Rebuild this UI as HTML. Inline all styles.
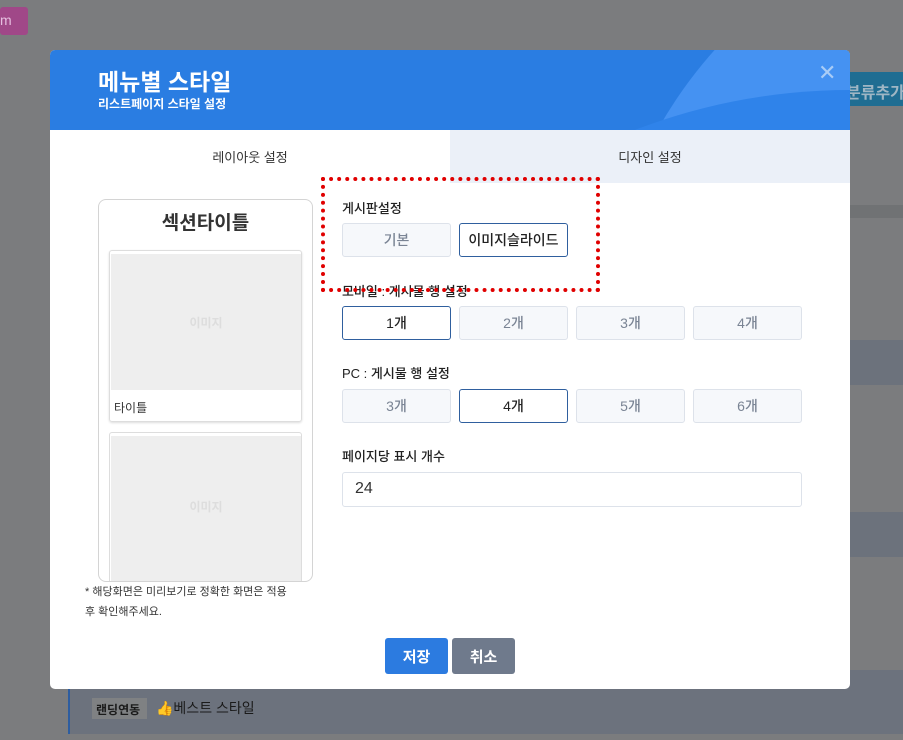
<!DOCTYPE html>
<html><head><meta charset="utf-8"><style>
*{box-sizing:border-box;margin:0;padding:0}
body{width:903px;height:740px;overflow:hidden;background:#7b7c7e;font-family:"Liberation Sans","Noto Sans CJK KR",sans-serif;position:relative}
.a{position:absolute}
.btn{position:absolute;width:109px;height:34px;border:1px solid #dde2ea;background:#f6f8fb;border-radius:3px;color:#7a8494;font-size:14px;font-weight:500;display:flex;align-items:center;justify-content:center}
.btn.on{border-color:#2f5f9e;background:#fff;color:#222}
.lbl{position:absolute;left:342px;font-size:13px;color:#222;font-weight:500}
</style></head><body>
<div class="a" style="left:0;top:7px;width:28px;height:28px;background:#a04888;border-radius:3px;color:#e6bfe0;font-size:14px;padding:5px 0 0 0">m</div>
<div class="a" style="left:838px;top:72px;width:65px;height:34px;background:#1f6d92;color:#9fb6c4;font-size:16px;font-weight:bold;padding:7px 0 0 8px;white-space:nowrap">분류추가</div>
<div class="a" style="left:850px;top:205px;width:53px;height:13px;background:#707274"></div>
<div class="a" style="left:850px;top:340px;width:53px;height:45px;background:#6c727c"></div>
<div class="a" style="left:850px;top:512px;width:53px;height:45px;background:#6c727c"></div>
<div class="a" style="left:68px;top:670px;width:835px;height:64px;background:#6c727d;border-left:2px solid #2d5da0"></div>
<div class="a" style="left:92px;top:698px;width:55px;height:21px;background:#7f8183;font-size:12px;font-weight:bold;color:#1a1a1a;padding:3px 0 0 4px">랜딩연동</div>
<div class="a" style="left:156px;top:698px;font-size:14px;color:#1a1a1a">👍베스트 스타일</div>

<div class="a" style="left:50px;top:50px;width:800px;height:639px;background:#fff;border-radius:5px;overflow:hidden">
 <div class="a" style="left:0;top:0;width:800px;height:80px;background:#2a7de2;overflow:hidden">
  <div class="a" style="left:550px;top:-150px;width:900px;height:900px;border-radius:50%;background:#4592f2"></div>
  <div class="a" style="left:200px;top:40px;width:1200px;height:1200px;border-radius:50%;background:#2f83ea"></div>
  <div class="a" style="left:48px;top:13px;color:#fff;font-size:23px;font-weight:bold">메뉴별 스타일</div>
  <div class="a" style="left:48px;top:45px;color:#fff;font-size:12px;font-weight:bold">리스트페이지 스타일 설정</div>
  <div class="a" style="left:768px;top:10px;color:#a9ccf6;font-size:22px;font-weight:300">✕</div>
 </div>
 <div class="a" style="left:0;top:80px;width:400px;height:53px;font-size:13px;color:#333;display:flex;align-items:center;justify-content:center">레이아웃 설정</div>
 <div class="a" style="left:400px;top:80px;width:400px;height:53px;background:#ebf0f8;font-size:13px;color:#333;display:flex;align-items:center;justify-content:center">디자인 설정</div>
 <div class="a" style="left:48px;top:149px;width:215px;height:383px;border:1px solid #d4d4d4;border-radius:8px;overflow:hidden">
  <div class="a" style="left:0;top:8px;width:213px;text-align:center;font-size:19px;font-weight:bold;color:#333">섹션타이틀</div>
  <div class="a" style="left:10px;top:50px;width:193px;height:172px;border:1px solid #ddd;border-radius:3px;box-shadow:0 1px 2px #ddd">
   <div class="a" style="left:1px;top:3px;width:190px;height:136px;background:#eee;color:#ddd;font-size:12px;font-weight:bold;display:flex;align-items:center;justify-content:center">이미지</div>
   <div class="a" style="left:4px;top:148px;font-size:12px;color:#333">타이틀</div>
  </div>
  <div class="a" style="left:10px;top:232px;width:193px;height:160px;border:1px solid #ddd;border-radius:3px">
   <div class="a" style="left:1px;top:3px;width:190px;height:160px;background:#eee;color:#ddd;font-size:12px;font-weight:bold;display:flex;align-items:center;justify-content:center;padding-bottom:20px">이미지</div>
  </div>
 </div>
 <div class="a" style="left:35px;top:532px;width:212px;font-size:11px;line-height:20px;color:#333">* 해당화면은 미리보기로 정확한 화면은 적용 후 확인해주세요.</div>
 <div class="a" style="left:335px;top:588px;width:63px;height:36px;background:#2c7be0;border-radius:3px;color:#fff;font-size:15px;font-weight:bold;display:flex;align-items:center;justify-content:center">저장</div>
 <div class="a" style="left:402px;top:588px;width:63px;height:36px;background:#6f7a8c;border-radius:3px;color:#fff;font-size:15px;font-weight:bold;display:flex;align-items:center;justify-content:center">취소</div>
</div>

<div class="lbl" style="top:198px">게시판설정</div>
<div class="btn" style="left:342px;top:223px">기본</div>
<div class="btn on" style="left:459px;top:223px">이미지슬라이드</div>
<div class="lbl" style="top:281px">모바일 : 게시물 행 설정</div>
<div class="btn on" style="left:342px;top:306px">1개</div>
<div class="btn" style="left:459px;top:306px">2개</div>
<div class="btn" style="left:576px;top:306px">3개</div>
<div class="btn" style="left:693px;top:306px">4개</div>
<div class="lbl" style="top:363px">PC : 게시물 행 설정</div>
<div class="btn" style="left:342px;top:389px">3개</div>
<div class="btn on" style="left:459px;top:389px">4개</div>
<div class="btn" style="left:576px;top:389px">5개</div>
<div class="btn" style="left:693px;top:389px">6개</div>
<div class="lbl" style="top:446px">페이지당 표시 개수</div>
<div class="a" style="left:342px;top:472px;width:460px;height:35px;border:1px solid #dde2ea;border-radius:3px;font-size:16px;color:#333;padding:7px 0 0 12px">24</div>
<div class="a" style="left:321px;top:177px;width:279px;height:115px;border:4px dotted #e00000"></div>
</body></html>
